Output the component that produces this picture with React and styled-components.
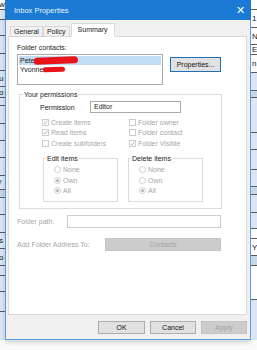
import React from 'react';
import styled, { createGlobalStyle } from 'styled-components';

const GlobalStyle = createGlobalStyle`
	body {
		margin: 0;
		background: #fafafa;
		font-family: 'Liberation Sans', Arial, sans-serif;
		font-size: 7px;
	}
	* {
		box-sizing: border-box;
	}
`;

const Page = styled.div`
	width: 257px;
	height: 350px;
	overflow: hidden;
	background: #fafafa;
`;

const Stage = styled.div`
	display: flex;
	height: 340px;
`;

const Strip = styled.div`
	width: ${(props) => props.width}px;
	display: flex;
	flex-direction: column;
	overflow: hidden;
	background: ${(props) => props.bg};
`;

const StripRow = styled.div`
	height: ${(props) => props.h}px;
	flex-shrink: 0;
	border-bottom: 1px solid #5a5a5a;
	background: ${(props) => props.bg || 'transparent'};
	font-size: 8px;
	line-height: ${(props) => props.h}px;
	color: #111;
	white-space: nowrap;
	padding-left: ${(props) => props.pad || 0}px;
	margin-left: ${(props) => props.shift || 0}px;
`;

const Dialog = styled.div`
	width: 246px;
	height: 340px;
	display: flex;
	flex-direction: column;
	background: #f0f0f0;
	border: 1px solid #5a9ee0;
	border-top: none;
	box-shadow: 0 2px 5px rgba(0, 0, 0, 0.18);
`;

const TitleBar = styled.div`
	height: 20px;
	margin: 0 -1px;
	display: flex;
	align-items: center;
	justify-content: space-between;
	padding: 0 6px 0 9px;
	background: #1a7ad4;
	color: #fff;
`;

const Title = styled.span`
	font-size: 7.5px;
	opacity: 0.92;
`;

const Close = styled.span`
	font-size: 11px;
	line-height: 11px;
	font-weight: 300;
`;

const Body = styled.div`
	flex: 1;
	display: flex;
	flex-direction: column;
	padding: 4px 3px 4px 2px;
`;

const Tabs = styled.div`
	display: flex;
	align-items: flex-end;
	height: 13px;
	padding-left: 2px;
	position: relative;
	z-index: 1;
	margin-bottom: -1px;
`;

const Tab = styled.div`
	height: ${(props) => (props.$active ? 14 : 11)}px;
	padding: 0 ${(props) => (props.$active ? 6 : 3)}px;
	line-height: ${(props) => (props.$active ? 12 : 10)}px;
	background: ${(props) => (props.$active ? '#fff' : '#f0f0f0')};
	border: 1px solid #d9d9d9;
	border-bottom: ${(props) => (props.$active ? '1px solid #fff' : '1px solid #d9d9d9')};
	margin-left: ${(props) => (props.$active ? 1 : 0)}px;
	color: #222;
	& + & {
		border-left: ${(props) => (props.$active ? '1px solid #d9d9d9' : 'none')};
	}
`;

const Panel = styled.div`
	height: 279px;
	background: #fff;
	border: 1px solid #d9d9d9;
	padding: 6px 0 0 8px;
	display: flex;
	flex-direction: column;
`;

const Caption = styled.div`
	line-height: 9px;
	color: ${(props) => (props.$dim ? '#a6a6a6' : '#222')};
	width: ${(props) => (props.width ? props.width + 'px' : 'auto')};
	flex-shrink: 0;
`;

const ContactsRow = styled.div`
	display: flex;
	align-items: flex-start;
	margin-top: 2px;
`;

const ListBox = styled.div`
	width: 146px;
	height: 31px;
	border: 1px solid #a9a9a9;
	padding: 1px;
`;

const ListItem = styled.div`
	height: 9px;
	line-height: 9px;
	padding-left: 1px;
	display: flex;
	align-items: center;
	background: ${(props) => (props.$selected ? '#c3ddf4' : 'transparent')};
	color: #1a1a1a;
`;

const Redact = styled.span`
	display: inline-block;
	width: ${(props) => props.w}px;
	height: ${(props) => props.h}px;
	background: #e8131b;
	border-radius: 3px 5px 4px 3px;
	transform: rotate(-2deg);
`;

const Button = styled.div`
	width: ${(props) => props.w}px;
	height: ${(props) => props.h || 13}px;
	display: flex;
	align-items: center;
	justify-content: center;
	flex-shrink: 0;
	background: ${(props) => (props.$disabled ? '#cccccc' : '#e1e1e1')};
	border: 1px solid ${(props) => (props.$focus ? '#1f6fb8' : props.$disabled ? '#c4c4c4' : '#adadad')};
	color: ${(props) => (props.$disabled ? '#a3a3a3' : '#111')};
`;

const PropertiesButton = styled(Button)`
	margin: 3px 0 0 7px;
`;

const Group = styled.fieldset`
	margin: ${(props) => props.margin || 0};
	padding: 0;
	min-width: 0;
	width: ${(props) => props.w}px;
	height: ${(props) => props.h}px;
	border: 1px solid #dcdcdc;
	display: flex;
	flex-direction: column;
`;

const Legend = styled.legend`
	padding: 0 1px;
	margin-left: ${(props) => props.indent || 3}px;
	line-height: 9px;
	color: #222;
`;

const PermRow = styled.div`
	display: flex;
	align-items: center;
	margin: 2px 0 0 20px;
	height: 12px;
`;

const TextBox = styled.div`
	width: ${(props) => props.w}px;
	height: ${(props) => props.h}px;
	border: 1px solid ${(props) => (props.$dim ? '#cfcfcf' : '#a9a9a9')};
	padding-left: 3px;
	line-height: ${(props) => props.h - 2}px;
	color: #222;
	background: #fff;
`;

const CheckGrid = styled.div`
	display: grid;
	grid-template-columns: 87px 80px;
	grid-auto-rows: 10.5px;
	margin: 4px 0 0 22px;
`;

const Option = styled.div`
	display: flex;
	align-items: center;
	gap: 2px;
	color: #a6a6a6;
	white-space: nowrap;
`;

const CheckBox = styled.span`
	width: 7px;
	height: 7px;
	border: 1px solid #cccccc;
	display: flex;
	align-items: center;
	justify-content: center;
	font-size: 7px;
	line-height: 7px;
	color: #b0b0b0;
`;

const SubGroups = styled.div`
	display: flex;
	gap: 10px;
	margin: 5px 0 0 23px;
`;

const RadioList = styled.div`
	display: flex;
	flex-direction: column;
	margin: 2px 0 0 10px;
`;

const RadioRow = styled(Option)`
	height: 10.5px;
`;

const RadioCircle = styled.span`
	width: 7px;
	height: 7px;
	border-radius: 50%;
	border: 1px solid #cdcdcd;
	display: flex;
	align-items: center;
	justify-content: center;
	&::after {
		content: '';
		width: 3px;
		height: 3px;
		border-radius: 50%;
		background: ${(props) => (props.$on ? '#b3b3b3' : 'transparent')};
	}
`;

const FieldRow = styled.div`
	display: flex;
	align-items: center;
	height: 13px;
	margin-top: ${(props) => props.top}px;
`;

const Footer = styled.div`
	display: flex;
	justify-content: flex-end;
	gap: 5px;
	margin-top: 6px;
`;

const leftRows = [
	{ h: 10, t: 'w', bg: '#ffffff' },
	{ h: 10 },
	{ h: 16 },
	{ h: 18 },
	{ h: 17 },
	{ h: 16, t: 'u' },
	{ h: 11, t: 'o' },
	{ h: 8 },
	{ h: 18 },
	{ h: 17 },
	{ h: 17 },
	{ h: 18 },
	{ h: 14, t: '/' },
	{ h: 8, bg: '#c9d6e6' },
	{ h: 17 },
	{ h: 18 },
	{ h: 16, t: 's' },
	{ h: 17, t: 'o' },
	{ h: 10 },
	{ h: 16 },
	{ h: 20 },
];

const rightRows = [
	{ h: 10, bg: '#ffffff' },
	{ h: 18, t: '1', bg: '#ffffff' },
	{ h: 17, t: 'N', bg: '#ffffff' },
	{ h: 10, t: 'E', bg: '#ffffff' },
	{ h: 18, t: 'n', bg: '#ffffff' },
	{ h: 18 },
	{ h: 7, bg: '#c9d6e6' },
	{ h: 35 },
	{ h: 17 },
	{ h: 20 },
	{ h: 17 },
	{ h: 8, bg: '#c9d6e6' },
	{ h: 18 },
	{ h: 16 },
	{ h: 10, bg: '#ffffff' },
	{ h: 17, t: 'Y', bg: '#ffffff' },
	{ h: 10, bg: '#c9d6e6' },
	{ h: 34, bg: '#ffffff' },
];

function Check({ on, children }) {
	return (
		<Option>
			<CheckBox>{on ? '✓' : ''}</CheckBox>
			{children}
		</Option>
	);
}

function Radio({ on, children }) {
	return (
		<RadioRow>
			<RadioCircle $on={on} />
			{children}
		</RadioRow>
	);
}

function App() {
	return (
		<Page>
			<GlobalStyle />
			<Stage>
				<Strip width={5} bg="#dce6f2">
					{leftRows.map((r, i) => (
						<StripRow key={i} h={r.h} bg={r.bg} shift={-1}>
							{r.t}
						</StripRow>
					))}
				</Strip>
				<Dialog>
					<TitleBar>
						<Title>Inbox Properties</Title>
						<Close>✕</Close>
					</TitleBar>
					<Body>
						<Tabs>
							<Tab>General</Tab>
							<Tab>Policy</Tab>
							<Tab $active>Summary</Tab>
						</Tabs>
						<Panel>
							<Caption>Folder contacts:</Caption>
							<ContactsRow>
								<ListBox>
									<ListItem $selected>
										Pete
										<Redact w={44} h={7} />
									</ListItem>
									<ListItem>
										Yvonne
										<Redact w={22} h={5} />
									</ListItem>
								</ListBox>
								<PropertiesButton w={51} h={15} $focus>
									Properties...
								</PropertiesButton>
							</ContactsRow>

							<Group w={203} h={119} margin="5px 0 0 2px">
								<Legend>Your permissions</Legend>
								<PermRow>
									<Caption width={50}>Permission</Caption>
									<TextBox w={91} h={12}>
										Editor
									</TextBox>
								</PermRow>
								<CheckGrid>
									<Check on>Create items</Check>
									<Check>Folder owner</Check>
									<Check on>Read items</Check>
									<Check>Folder contact</Check>
									<Check>Create subfolders</Check>
									<Check on>Folder Visible</Check>
								</CheckGrid>
								<SubGroups>
									<Group w={75} h={48}>
										<Legend indent={2}>Edit items</Legend>
										<RadioList>
											<Radio>None</Radio>
											<Radio on>Own</Radio>
											<Radio on>All</Radio>
										</RadioList>
									</Group>
									<Group w={75} h={48}>
										<Legend indent={2}>Delete items</Legend>
										<RadioList>
											<Radio>None</Radio>
											<Radio>Own</Radio>
											<Radio on>All</Radio>
										</RadioList>
									</Group>
								</SubGroups>
							</Group>

							<FieldRow top={6}>
								<Caption width={50} $dim>
									Folder path:
								</Caption>
								<TextBox w={154} h={13} $dim />
							</FieldRow>
							<FieldRow top={10}>
								<Caption width={88} $dim>
									Add Folder Address To:
								</Caption>
								<Button w={116} $disabled>
									Contacts
								</Button>
							</FieldRow>
						</Panel>
						<Footer>
							<Button w={47}>OK</Button>
							<Button w={46}>Cancel</Button>
							<Button w={46} $disabled>
								Apply
							</Button>
						</Footer>
					</Body>
				</Dialog>
				<Strip width={6} bg="#dce6f2">
					{rightRows.map((r, i) => (
						<StripRow key={i} h={r.h} bg={r.bg} pad={1}>
							{r.t}
						</StripRow>
					))}
				</Strip>
			</Stage>
		</Page>
	);
}

export default App;
